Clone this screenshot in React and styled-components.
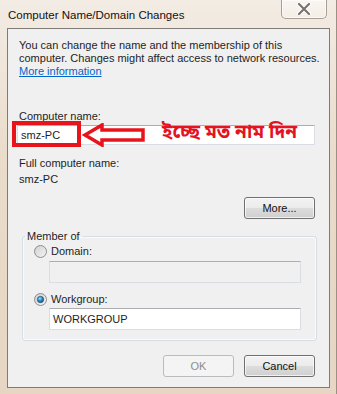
import React from 'react';
import styled, { createGlobalStyle } from 'styled-components';

const GlobalStyle = createGlobalStyle`
    html, body {
        margin: 0;
        padding: 0;
        background: #e9dccb;
    }
    #root {
        width: 337px;
        height: 394px;
    }
`;

const Window = styled.div`
    box-sizing: border-box;
    width: 337px;
    height: 394px;
    display: flex;
    flex-direction: column;
    padding: 0 6px 6px 7px;
    background: linear-gradient(180deg, #f3ece4 0%, #eadccb 40%, #e6d6c3 100%);
    border-right: 1px solid #9a9186;
    font-family: 'Liberation Sans', Arial, sans-serif;
    color: #1e1e1e;
`;

const TitleBar = styled.div`
    height: 28px;
    display: flex;
    justify-content: space-between;
    align-items: flex-start;
`;

const Title = styled.div`
    font-size: 11.5px;
    padding-top: 9px;
    padding-left: 1px;
    color: #111;
`;

const CloseButton = styled.div`
    box-sizing: border-box;
    width: 46px;
    height: 19px;
    margin-right: 3px;
    display: flex;
    align-items: center;
    justify-content: center;
    border: 1px solid #a69f96;
    border-top: none;
    border-radius: 0 0 5px 5px;
    background: linear-gradient(180deg, rgba(255,255,255,0.5), rgba(255,255,255,0.15));
    box-shadow: inset 0 0 0 1px rgba(255,255,255,0.6);
`;

const Client = styled.div`
    flex: 1;
    box-sizing: border-box;
    border: 1px solid #7f7b76;
    background: #f0f0f0;
    padding: 10px 14px 0 11px;
    font-size: 11px;
    display: flex;
    flex-direction: column;
`;

const Para = styled.p`
    margin: 0;
    line-height: 13px;
    white-space: nowrap;
`;

const Link = styled.a`
    color: #0066cc;
    text-decoration: underline;
`;

const Label = styled.div`
    line-height: 14px;
    margin-top: ${(p) => p.top || 0}px;
`;

const Field = styled.div`
    position: relative;
    margin-top: ${(p) => p.top || 0}px;
    margin-left: ${(p) => p.left || 0}px;
`;

const TextBox = styled.div`
    box-sizing: border-box;
    height: ${(p) => p.h || 20}px;
    padding: 0 3px;
    display: flex;
    align-items: center;
    background: ${(p) => (p.disabled ? '#f0f0f0' : '#ffffff')};
    border: 1px solid #dadde3;
    border-top-color: #abadb3;
    border-radius: 1px;
`;

const RedBox = styled.div`
    position: absolute;
    left: -5px;
    top: -4px;
    width: 69px;
    height: 26px;
    box-sizing: border-box;
    border: 4px solid #e8141b;
`;

const Arrow = styled.svg`
    position: absolute;
    left: 65px;
    top: -2px;
`;

const Note = styled.div`
    position: absolute;
    left: 145px;
    top: -4px;
    font-family: 'Noto Sans Bengali', 'Noto Sans', 'Liberation Sans', sans-serif;
    font-weight: bold;
    font-size: 19px;
    line-height: 26px;
    color: #e3141f;
    white-space: nowrap;
`;

const ButtonRow = styled.div`
    display: flex;
    justify-content: flex-end;
    gap: 10px;
    margin-top: ${(p) => p.top || 0}px;
`;

const Button = styled.div`
    box-sizing: border-box;
    width: 71px;
    height: 22px;
    display: flex;
    align-items: center;
    justify-content: center;
    border-radius: 3px;
    border: 1px solid ${(p) => (p.disabled ? '#b9bcbe' : '#707070')};
    color: ${(p) => (p.disabled ? '#8d8d8d' : '#111')};
    background: ${(p) =>
        p.disabled
            ? '#f4f4f4'
            : 'linear-gradient(180deg, #f2f2f2 0%, #ebebeb 50%, #dddddd 51%, #cfcfcf 100%)'};
    box-shadow: inset 0 0 0 1px ${(p) => (p.disabled ? '#f4f4f4' : 'rgba(255,255,255,0.7)')};
`;

const Group = styled.fieldset`
    margin: 10px -2px 0 3px;
    padding: 0 15px 10px 11px;
    border: 1px solid #d5dfe5;
    border-radius: 3px;
    box-shadow: inset 0 0 0 1px #fafafa;
    min-width: 0;
`;

const Legend = styled.legend`
    padding: 0 2px;
    margin-left: -9px;
    line-height: 14px;
`;

const RadioRow = styled.div`
    display: flex;
    align-items: center;
    gap: 4px;
    height: 14px;
    margin-top: ${(p) => p.top || 0}px;
`;

const Radio = ({ checked }) => (
    <svg width="13" height="13" viewBox="0 0 13 13">
        <defs>
            <linearGradient id={checked ? 'rc' : 'ru'} x1="0" y1="0" x2="1" y2="1">
                <stop offset="0" stopColor="#cfcfcf" />
                <stop offset="1" stopColor="#f6f6f6" />
            </linearGradient>
            <radialGradient id="dot" cx="0.4" cy="0.35" r="0.7">
                <stop offset="0" stopColor="#a9e0f7" />
                <stop offset="0.5" stopColor="#2c8ac4" />
                <stop offset="1" stopColor="#0f4f86" />
            </radialGradient>
        </defs>
        <circle cx="6.5" cy="6.5" r="6" fill={`url(#${checked ? 'rc' : 'ru'})`} stroke="#8d8d8d" strokeWidth="1" />
        {checked && <circle cx="6.5" cy="6.5" r="3.2" fill="url(#dot)" stroke="#274b6d" strokeWidth="0.6" />}
    </svg>
);

const App = () => {
    return (
        <>
            <GlobalStyle />
            <Window>
                <TitleBar>
                    <Title>Computer Name/Domain Changes</Title>
                    <CloseButton>
                        <svg width="14" height="12" viewBox="0 0 14 12">
                            <path d="M2 1 L12 11 M12 1 L2 11" stroke="#ffffff" strokeWidth="4.2" strokeLinecap="round" />
                            <path d="M2 1 L12 11 M12 1 L2 11" stroke="#7a7470" strokeWidth="2.2" strokeLinecap="round" />
                        </svg>
                    </CloseButton>
                </TitleBar>
                <Client>
                    <Para>
                        You can change the name and the membership of this
                        <br />
                        computer. Changes might affect access to network resources.
                        <br />
                        <Link>More information</Link>
                    </Para>
                    <Label top={31}>Computer name:</Label>
                    <Field top={2} left={-2}>
                        <TextBox>smz-PC</TextBox>
                        <RedBox />
                        <Arrow width="66" height="24" viewBox="0 0 66 24">
                            <path
                                d="M20 2 L3 12 L20 22 L20 17 L61 17 L61 7 L20 7 Z"
                                fill="#ffffff"
                                stroke="#e8141b"
                                strokeWidth="3.5"
                                strokeLinejoin="miter"
                            />
                        </Arrow>
                        <Note>ইচ্ছে মত নাম দিন</Note>
                    </Field>
                    <Label top={11}>Full computer name:</Label>
                    <Label top={2}>smz-PC</Label>
                    <ButtonRow top={11}>
                        <Button>More...</Button>
                    </ButtonRow>
                    <Group>
                        <Legend>Member of</Legend>
                        <RadioRow top={1}>
                            <Radio />
                            Domain:
                        </RadioRow>
                        <Field top={3} left={15}>
                            <TextBox h={22} disabled />
                        </Field>
                        <RadioRow top={9}>
                            <Radio checked />
                            Workgroup:
                        </RadioRow>
                        <Field top={2} left={15}>
                            <TextBox h={22}>WORKGROUP</TextBox>
                        </Field>
                    </Group>
                    <ButtonRow top={14}>
                        <Button disabled>OK</Button>
                        <Button>Cancel</Button>
                    </ButtonRow>
                </Client>
            </Window>
        </>
    );
};

export default App;
